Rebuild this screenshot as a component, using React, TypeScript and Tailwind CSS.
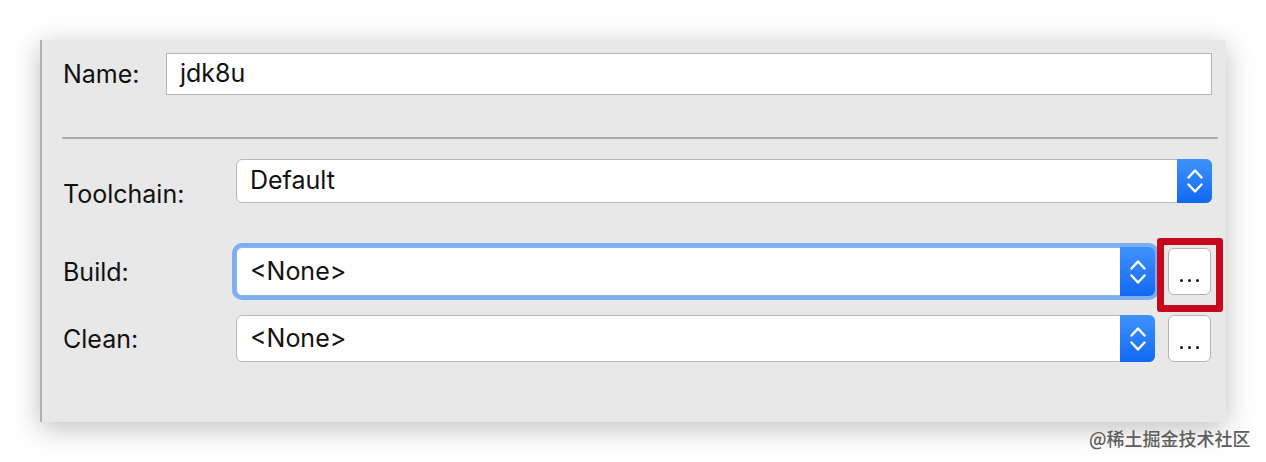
import React from 'react';

const font = { fontFamily: 'Inter, "Liberation Sans", sans-serif' };

function Stepper() {
  return (
    <div className="w-[35px] self-stretch -my-px -mr-px rounded-r-[6px] bg-gradient-to-b from-[#3f92fb] to-[#0f68f2] flex items-center justify-center">
      <svg width="16" height="26" viewBox="0 0 16 26" fill="none">
        <path d="M1.5 9.5 L8 2.5 L14.5 9.5" stroke="white" strokeWidth="2.4" strokeLinecap="round" strokeLinejoin="round" />
        <path d="M1.5 16.5 L8 23.5 L14.5 16.5" stroke="white" strokeWidth="2.4" strokeLinecap="round" strokeLinejoin="round" />
      </svg>
    </div>
  );
}

function Select({ value, width, height, focused }: { value: string; width: number; height: number; focused?: boolean }) {
  return (
    <div
      className={`flex items-stretch bg-white rounded-[6px] border ${
        focused ? 'border-[#8ab4ee] shadow-[0_0_0_4px_#7eaef2]' : 'border-[#b9b9b9]'
      }`}
      style={{ width, height }}
    >
      <div className="flex-1 flex items-center pl-[13px] text-[25px] text-[#111]">{value}</div>
      <Stepper />
    </div>
  );
}

function DotsButton({ height }: { height: number }) {
  return (
    <div
      className="w-[43px] bg-white border border-[#b4b4b4] rounded-[6px] flex items-center justify-center gap-[5px] pt-[18px]"
      style={{ height }}
    >
      <div className="w-[3px] h-[3px] rounded-full bg-[#111]" />
      <div className="w-[3px] h-[3px] rounded-full bg-[#111]" />
      <div className="w-[3px] h-[3px] rounded-full bg-[#111]" />
    </div>
  );
}

export default function App() {
  return (
    <div className="relative w-[1266px] h-[462px] bg-white overflow-hidden" style={font}>
      <div className="ml-[40px] pt-[40px]">
        <div className="w-[1186px] h-[382px] bg-[#e8e8e8] border-l-2 border-[#b1b1b1] shadow-[0_6px_26px_rgba(0,0,0,0.26)] pl-[21px] flex flex-col">
          {/* Name */}
          <div className="mt-[13px] h-[42px] flex items-center">
            <div className="w-[103px] text-[25px] leading-[28px] text-[#111]">Name:</div>
            <div className="w-[1046px] h-[42px] bg-white border border-[#b6b6b6] flex items-center pl-[13px] text-[25px] text-[#111]">
              jdk8u
            </div>
          </div>

          <div className="-ml-px mt-[42px] w-[1156px] h-[2px] bg-[#a9a9a9]" />

          {/* Toolchain */}
          <div className="mt-[20px] flex items-start">
            <div className="w-[173px] mt-[21px] text-[25px] leading-[28px] text-[#111]">Toolchain:</div>
            <Select value="Default" width={976} height={44} />
          </div>

          {/* Build */}
          <div className="mt-[39px] flex items-center">
            <div className="w-[173px] text-[25px] leading-[28px] text-[#111]">Build:</div>
            <Select value="<None>" width={919} height={49} focused />
            <div className="relative ml-[13px]">
              <DotsButton height={47} />
              <div className="absolute -left-[11px] -top-[10px] w-[66px] h-[74px] border-[7px] border-[#c7081c] rounded-[3px]" />
            </div>
          </div>

          {/* Clean */}
          <div className="mt-[19px] flex items-center">
            <div className="w-[173px] text-[25px] leading-[28px] text-[#111]">Clean:</div>
            <Select value="<None>" width={919} height={47} />
            <div className="ml-[13px]">
              <DotsButton height={47} />
            </div>
          </div>
        </div>
      </div>

      {/* watermark */}
      <div
        className="absolute left-[1037px] top-[441px] text-[15px] text-white/80 whitespace-nowrap"
        style={{ fontFamily: '"Liberation Sans", sans-serif' }}
      >
        https://blog.csdn.net/cunmaryfor
      </div>
      <div
        className="absolute left-[1089px] top-[425px] text-[18px] font-medium text-[#5e5e5e] whitespace-nowrap"
        style={{ fontFamily: '"Noto Sans CJK SC", sans-serif' }}
      >
        @稀土掘金技术社区
      </div>
    </div>
  );
}
